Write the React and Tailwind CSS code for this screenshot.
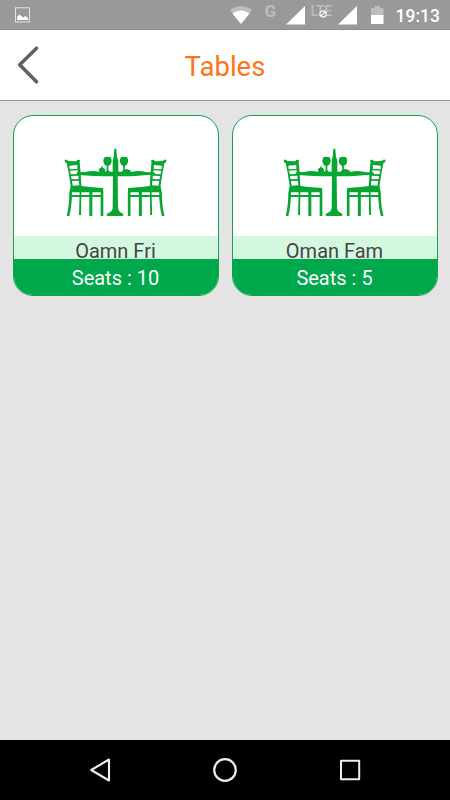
const tables = [
  { id: 1, name: 'Oamn Fri', seats: 10 },
  { id: 2, name: 'Oman Fam', seats: 5 },
];

const Chair = () => (
  <g>
    {/* Back posts and rear legs */}
    <path d="M44 59 L52 59 L54 63 L79 64 L82 59 L90 60 L89 67 L92 98 L94 138 L120 141 L159 144 L160 155 L160 228 L152 228 L152 157 L127 157 L127 228 L118 228 L118 157 L94 157 L93 225 L87 225 L89 157 L66 157 C66 185 63 208 58 228 L50 228 C56 205 58 180 58 158 L62 138 L56 98 L50 69 L45 67 Z" />
    <path d="M61 165H157V171H61Z" />
    {/* Gaps between the slats */}
    <g fill="#fff">
      <path d="M58 77L82 75V87L59 88Z" />
      <path d="M60 92L83 91L84 102L62 103Z" />
      <path d="M63 108L85 107L86 117L65 118Z" />
      <path d="M66 123L86 122L88 136L68 137Z" />
    </g>
  </g>
);

const Glass = () => (
  <path d="M163 52Q172 49 182 52Q191 70 175 78V91L180 96H165L170 91V78Q154 70 163 52Z" />
);

const DiningIcon = () => (
  <svg viewBox="42 24 312 207" className="w-[104px] h-[69px]" fill="#07a532">
    <Chair />
    <g transform="translate(393.5 0) scale(-1 1)">
      <Chair />
    </g>
    {/* Table top and stand */}
    <path d="M80 97L106 96Q125 91 146 95H248Q266 91 287 96L316 98L313 104Q270 106 240 109H155Q120 107 80 104Z" />
    <path d="M189 106H203L204 205Q206 216 216 219Q226 226 216 228H174Q164 226 175 219Q186 216 188 205Z" />
    {/* Bottle */}
    <path d="M193 26H199L201 51Q205 58 205 68V106H188V68Q188 58 191 51Z" />
    <Glass />
    <g transform="translate(49.5 0)">
      <Glass />
    </g>
    <path d="M146 89L150 84L153 84L155 77L159 83L166 88L164 97H149Z" />
    <path d="M216 97L220 89L229 87L240 90L244 97Z" />
  </svg>
);

const TableCard = ({ table }) => (
  <div className="h-[181px] flex flex-col bg-white border border-[#16a04c] rounded-[20px] overflow-hidden">
    <div className="h-[120px] shrink-0 flex justify-center pt-8">
      <DiningIcon />
    </div>
    <div className="h-[23px] shrink-0 pt-[3px] bg-[#d4f8df] text-center text-[20px] leading-6 text-[#444]">
      {table.name}
    </div>
    <div className="flex-1 bg-[#00a84c] text-center text-[20px] leading-[38px] text-white">
      Seats : {table.seats}
    </div>
  </div>
);

const StatusBar = () => (
  <div className="h-[30px] shrink-0 flex bg-[#999] border-b border-[#8e8a8c] text-white">
    <svg className="ml-[15px] mt-[7px] w-[15px] h-[16px]" viewBox="0 0 15 16">
      <rect x="0.5" y="0.8" width="14" height="14.2" fill="none" stroke="#e4e4e4" />
      <path d="M2 13V10L4.5 7.5L7 9.5L8 10.5L10.5 9L13 11V13Z" fill="#fff" />
    </svg>
    <div className="flex ml-auto mr-2.5">
      <svg className="w-[22px] h-[18px] mt-[6px]" viewBox="0 0 22 18">
        <path d="M0 4Q11 -4 22 4L11 18Z" fill="#bdbdbd" />
        <path d="M2.5 7.5Q11 1.5 19.5 7.5L11 18Z" fill="#fff" />
      </svg>
      <span className="w-[13px] ml-[13px] mt-[1px] text-[17px] leading-5 font-bold text-[#bdbdbd]">G</span>
      <svg className="w-[19px] h-[19px] ml-[8px] mt-[6px]" viewBox="0 0 19 19">
        <path d="M19 0V18.5H0Z" fill="#fff" />
      </svg>
      <div className="relative w-[22px] ml-[6px] mt-[3px] text-[14px] leading-[17px] tracking-[-0.4px] font-medium text-[#bdbdbd]">
        LTE
        <svg className="absolute left-[8px] top-[7px] w-2 h-2" viewBox="0 0 8 8">
          <circle cx="4" cy="4" r="3.1" fill="#999" stroke="#fff" strokeWidth="1.2" />
          <path d="M1.8 6.2L6.2 1.8" stroke="#fff" strokeWidth="1.2" />
        </svg>
      </div>
      <svg className="w-[19px] h-[19px] ml-[5px] mt-[6px]" viewBox="0 0 19 19">
        <path d="M19 0V18.5H0Z" fill="#fff" />
      </svg>
      <svg className="w-[13px] h-[19px] ml-[14px] mt-[6px]" viewBox="0 0 13 19">
        <path d="M3.5 0H9V2H12.5V9H0V2H3.5Z" fill="#bdbdbd" />
        <path d="M0 9H12.5V18H0Z" fill="#fff" />
      </svg>
      <span className="ml-[12px] mt-[6px] text-[17.5px] leading-5 font-medium whitespace-nowrap">19:13</span>
    </div>
  </div>
);

const NavBar = () => (
  <div className="h-[60px] shrink-0 bg-black flex items-center justify-between px-[87px]">
    <svg className="w-[26px] h-[26px]" viewBox="0 0 26 26" fill="none" stroke="#eee" strokeWidth="2.1" strokeLinejoin="round">
      <path d="M4.2 13L22 2.5V23.5Z" />
    </svg>
    <svg className="w-[26px] h-[26px]" viewBox="0 0 26 26" fill="none" stroke="#eee" strokeWidth="2.2">
      <circle cx="13" cy="13" r="10.8" />
    </svg>
    <svg className="w-[26px] h-[26px]" viewBox="0 0 26 26" fill="none" stroke="#eee" strokeWidth="2" strokeLinejoin="round">
      <rect x="4" y="3.8" width="18.2" height="18.5" />
    </svg>
  </div>
);

const App = () => {
  return (
    <div className="w-full h-screen flex flex-col bg-[#e4e4e4] font-['Roboto',sans-serif] overflow-hidden">
      <StatusBar />

      {/* Header */}
      <header className="h-[71px] shrink-0 grid grid-cols-[60px_1fr_60px] items-center bg-white border-b border-[#999]">
        <button type="button" aria-label="Back" className="pl-[17px]">
          <svg className="w-[22px] h-[38px]" viewBox="0 0 22 38" fill="none" stroke="#616161" strokeWidth="3.5" strokeLinecap="round" strokeLinejoin="round">
            <path d="M19.5 2.2L2.7 18.7L19.5 35.8" />
          </svg>
        </button>
        <h1 className="pt-[3px] text-center text-[27.5px] leading-none text-[#ff7416]">Tables</h1>
      </header>

      {/* Table list */}
      <main className="flex-1 grid grid-cols-2 content-start gap-x-[13px] px-[12.5px] pt-3.5">
        {tables.map((table) => (
          <TableCard key={table.id} table={table} />
        ))}
      </main>

      <NavBar />
    </div>
  );
};

export default App;
